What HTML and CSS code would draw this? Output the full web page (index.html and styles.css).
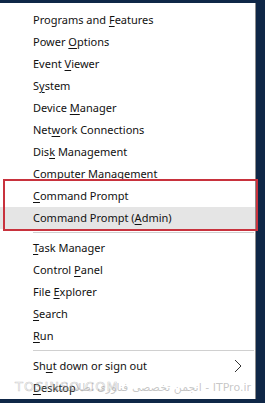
FILE: index.html
```html
<!DOCTYPE html>
<html lang="en">
<head>
    <meta charset="UTF-8">
    <meta name="viewport" content="width=device-width, initial-scale=1.0">
    <title>Quick Link Menu</title>
    <link rel="stylesheet" href="styles.css">
</head>
<body>
    <div class="menu">
        <div class="item">Programs and <u>F</u>eatures</div>
        <div class="item">Power <u>O</u>ptions</div>
        <div class="item">Event <u>V</u>iewer</div>
        <div class="item">S<u>y</u>stem</div>
        <div class="item">Device <u>M</u>anager</div>
        <div class="item">Net<u>w</u>ork Connections</div>
        <div class="item">Dis<u>k</u> Management</div>
        <div class="item">Computer Mana<u>g</u>ement</div>
        <div class="item"><u>C</u>ommand Prompt</div>
        <div class="item active">Command Prompt (<u>A</u>dmin)</div>
        <div class="sep"></div>
        <div class="item"><u>T</u>ask Manager</div>
        <div class="item">Control <u>P</u>anel</div>
        <div class="item">File <u>E</u>xplorer</div>
        <div class="item"><u>S</u>earch</div>
        <div class="item"><u>R</u>un</div>
        <div class="sep"></div>
        <div class="item has-sub">
            <span>Sh<u>u</u>t down or sign out</span>
            <svg class="chev" width="8" height="14" viewBox="0 0 8 14">
                <polyline points="1,1 7,7 1,13" fill="none" stroke="#333" stroke-width="1"/>
            </svg>
        </div>
        <div class="item"><u>D</u>esktop</div>

        <div class="highlight-box"></div>
        <div class="watermark">
            <span class="wm-site">TOSINSO.COM</span>
            <span class="wm-text" dir="rtl">ITPro.ir - انجمن تخصصی فناوری اطلاعات</span>
        </div>
    </div>
</body>
</html>
```

FILE: styles.css
```css
body {
    margin: 0;
    height: 403px;
    overflow: hidden;
    background: #0f2747;
    font-family: "Noto Sans", "Open Sans", sans-serif;
    font-size: 11px;
    color: #111;
}

.menu {
    position: relative;
    width: 256px;
    height: 396px;
    margin-top: 3px;
    padding-top: 6px;
    box-sizing: border-box;
    background: #fff;
    border-right: 1px solid #8c8c8c;
    display: flex;
    flex-direction: column;
}

.item {
    height: 22px;
    line-height: 22px;
    padding-left: 33px;
    white-space: nowrap;
}

.item u {
    text-decoration-thickness: 1px;
    text-underline-offset: 2px;
}

.item.active {
    background: #e5e5e5;
}

.has-sub {
    display: flex;
    align-items: center;
    justify-content: space-between;
    padding-right: 13px;
}

.chev {
    display: block;
}

.sep {
    height: 1px;
    margin: 3px 0 4px 33px;
    background: #d0d0d0;
    width: 221px;
}

.highlight-box {
    position: absolute;
    top: 176px;
    left: 3px;
    width: 251px;
    height: 48px;
    border: 2px solid #c8323d;
}

.watermark {
    position: absolute;
    left: 15px;
    top: 375px;
    width: 236px;
    height: 20px;
    font-family: "DejaVu Sans", sans-serif;
    color: rgba(130, 130, 130, 0.45);
    pointer-events: none;
}

.wm-site {
    position: absolute;
    left: 0;
    top: 1px;
    font-size: 13px;
    letter-spacing: 1px;
    color: rgba(255, 255, 255, 0.2);
    -webkit-text-stroke: 0.6px rgba(150, 150, 150, 0.5);
}

.wm-text {
    position: absolute;
    right: 0;
    top: 3px;
    font-size: 11px;
}
```
